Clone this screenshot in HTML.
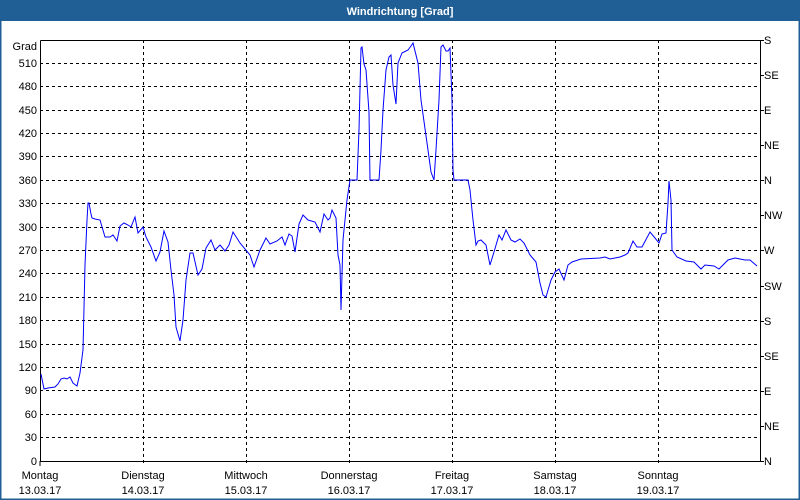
<!DOCTYPE html>
<html><head><meta charset="utf-8"><style>
html,body{margin:0;padding:0;background:#fff;}
body{width:800px;height:500px;overflow:hidden;position:relative;font-family:"Liberation Sans",sans-serif;}
</style></head><body>
<svg width="800" height="500" xmlns="http://www.w3.org/2000/svg" style="position:absolute;left:0;top:0" font-family="'Liberation Sans', sans-serif" font-size="11">
<rect x="0" y="0" width="800" height="500" fill="#fff"/>
<rect x="0" y="0" width="800" height="21" fill="#1f5f96"/>
<rect x="0" y="0" width="1.5" height="500" fill="#1f5f96"/>
<rect x="798.5" y="0" width="1.5" height="500" fill="#1f5f96"/>
<rect x="0" y="498.5" width="800" height="1.5" fill="#1f5f96"/>
<text x="400" y="15" fill="#fff" font-weight="bold" text-anchor="middle" font-size="11">Windrichtung [Grad]</text>
<g stroke="#000" stroke-width="1" stroke-dasharray="3,3" fill="none" shape-rendering="crispEdges">
<line x1="40" x2="760" y1="437.5" y2="437.5"/><line x1="40" x2="760" y1="414.5" y2="414.5"/>
<line x1="40" x2="760" y1="390.5" y2="390.5"/><line x1="40" x2="760" y1="367.5" y2="367.5"/>
<line x1="40" x2="760" y1="344.5" y2="344.5"/><line x1="40" x2="760" y1="320.5" y2="320.5"/>
<line x1="40" x2="760" y1="297.5" y2="297.5"/><line x1="40" x2="760" y1="273.5" y2="273.5"/>
<line x1="40" x2="760" y1="250.5" y2="250.5"/><line x1="40" x2="760" y1="227.5" y2="227.5"/>
<line x1="40" x2="760" y1="203.5" y2="203.5"/><line x1="40" x2="760" y1="180.5" y2="180.5"/>
<line x1="40" x2="760" y1="156.5" y2="156.5"/><line x1="40" x2="760" y1="133.5" y2="133.5"/>
<line x1="40" x2="760" y1="110.5" y2="110.5"/><line x1="40" x2="760" y1="86.5" y2="86.5"/>
<line x1="40" x2="760" y1="63.5" y2="63.5"/>
<line x1="143.5" x2="143.5" y1="40" y2="465"/><line x1="246.5" x2="246.5" y1="40" y2="465"/>
<line x1="349.5" x2="349.5" y1="40" y2="465"/><line x1="452.5" x2="452.5" y1="40" y2="465"/>
<line x1="555.5" x2="555.5" y1="40" y2="465"/><line x1="658.5" x2="658.5" y1="40" y2="465"/>
</g>
<g stroke="#000" stroke-width="1" fill="none" shape-rendering="crispEdges">
<polyline points="40.5,40.5 760.5,40.5 760.5,461.5 40.5,461.5 40.5,40.5"/>
<line x1="40" x2="40" y1="461" y2="466"/>
<line x1="760" x2="764" y1="461.5" y2="461.5"/><line x1="760" x2="764" y1="426.5" y2="426.5"/>
<line x1="760" x2="764" y1="391.5" y2="391.5"/><line x1="760" x2="764" y1="356.5" y2="356.5"/>
<line x1="760" x2="764" y1="321.5" y2="321.5"/><line x1="760" x2="764" y1="286.5" y2="286.5"/>
<line x1="760" x2="764" y1="250.5" y2="250.5"/><line x1="760" x2="764" y1="215.5" y2="215.5"/>
<line x1="760" x2="764" y1="180.5" y2="180.5"/><line x1="760" x2="764" y1="145.5" y2="145.5"/>
<line x1="760" x2="764" y1="110.5" y2="110.5"/><line x1="760" x2="764" y1="75.5" y2="75.5"/>
<line x1="760" x2="764" y1="40.5" y2="40.5"/>
</g>
<g fill="#000" text-anchor="end">
<text x="37" y="50">Grad</text>
<text x="37" y="67">510</text><text x="37" y="90">480</text><text x="37" y="114">450</text>
<text x="37" y="137">420</text><text x="37" y="160">390</text><text x="37" y="184">360</text>
<text x="37" y="207">330</text><text x="37" y="231">300</text><text x="37" y="254">270</text>
<text x="37" y="277">240</text><text x="37" y="301">210</text><text x="37" y="324">180</text>
<text x="37" y="348">150</text><text x="37" y="371">120</text><text x="37" y="394">90</text>
<text x="37" y="418">60</text><text x="37" y="441">30</text><text x="37" y="465">0</text>
</g>
<g fill="#000">
<text x="764" y="465">N</text><text x="764" y="430">NE</text><text x="764" y="395">E</text>
<text x="764" y="360">SE</text><text x="764" y="325">S</text><text x="764" y="290">SW</text>
<text x="764" y="254">W</text><text x="764" y="219">NW</text><text x="764" y="184">N</text>
<text x="764" y="149">NE</text><text x="764" y="114">E</text><text x="764" y="79">SE</text>
<text x="764" y="44">S</text>
</g>
<g fill="#000" text-anchor="middle">
<text x="40" y="479">Montag</text><text x="40" y="494">13.03.17</text>
<text x="143" y="479">Dienstag</text><text x="143" y="494">14.03.17</text>
<text x="246" y="479">Mittwoch</text><text x="246" y="494">15.03.17</text>
<text x="349" y="479">Donnerstag</text><text x="349" y="494">16.03.17</text>
<text x="452" y="479">Freitag</text><text x="452" y="494">17.03.17</text>
<text x="555" y="479">Samstag</text><text x="555" y="494">18.03.17</text>
<text x="658" y="479">Sonntag</text><text x="658" y="494">19.03.17</text>
</g>
<polyline fill="none" stroke="#0000ff" stroke-width="1" points="41,374 44,389 48,388 55,387 58,384 61,379 64,378 67,379 70,377 73,383 77,386 80,373 83,350 85,265 87,220 88,203 89,203 91,214 92,218 95,219 100,220 105,237 110,237 113,235 117,241 120,226 124,223 128,225 131,227 135,217 138,233 143,227 146,237 151,247 156,261 160,252 164,231 168,242 171,270 174,295 176,327 180,341 183,320 186,280 190,253 193,253 198,275 202,269 206,248 211,240 215,250 220,245 225,251 229,245 233,232 240,243 250,255 254,267 260,250 266,238 270,244 277,241 282,237 285,245 289,234 292,236 295,252 299,224 303,215 308,220 315,222 320,232 324,214 328,220 330,218 332,210 336,218 338,255 340,265 341,310 343,240 347,200 350,180 357,180 359,130 361,48 362,47 364,64 366,70 369,112 370,180 379,180 381,150 383,110 386,70 389,57 391,55 393,85 396,104 398,63 402,53 408,50 411,46 413,43 418,63 421,100 428,150 431,172 434,180 436,150 439,100 441,47 443,45 446,51 448,51 450,48 452,100 453,170 454,180 468,180 470,190 473,220 476,245 478,241 481,240 486,245 490,265 494,252 499,235 502,240 506,230 511,240 515,242 520,239 524,243 530,255 536,262 540,283 543,295 546,297 551,280 555,272 559,269 564,280 568,265 572,262 581,259 600,258 605,257 610,259 620,257 625,255 628,253 633,241 637,247 642,247 650,232 655,238 659,243 662,234 666,233 668,203 669,181 671,200 672,250 677,257 686,261 694,262 698,266 701,269 705,265 714,266 719,269 728,260 735,258 740,259 745,260 750,260 757,266"/>
</svg>
</body></html>
